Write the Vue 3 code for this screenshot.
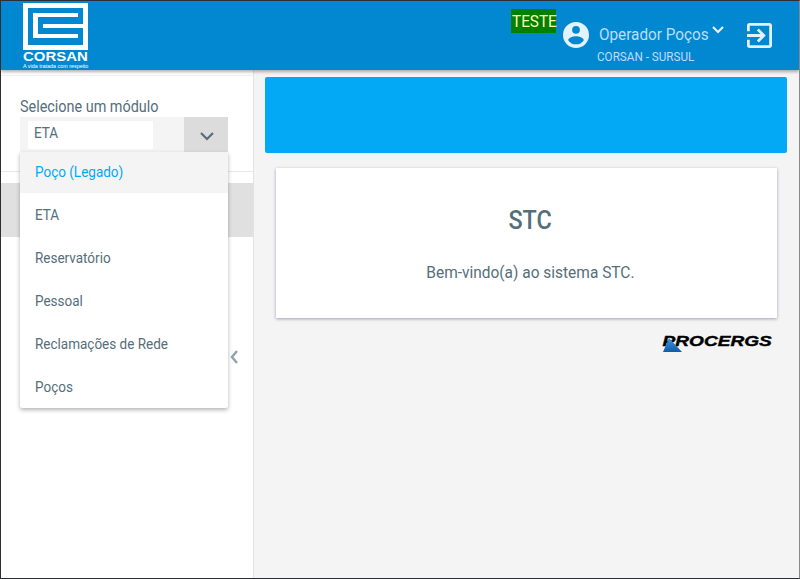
<script setup>
const items = ['Poço (Legado)', 'ETA', 'Reservatório', 'Pessoal', 'Reclamações de Rede', 'Poços']
</script>

<template>
  <div class="page">
    <header class="top">
      <div class="brand">
        <svg class="logo" width="65" height="47" viewBox="0 0 65 47">
          <rect width="65" height="47" fill="#fff" />
          <rect x="5" y="5" width="55" height="37" fill="#0288d1" />
          <path d="M55 10H10V35H55V31H15V14H55z" fill="#fff" />
          <rect x="20" y="21" width="40" height="4" fill="#fff" />
        </svg>
        <div class="corsan">CORSAN</div>
        <div class="tagline">A vida tratada com respeito</div>
      </div>
      <div class="spacer"></div>
      <div class="teste"><span class="sq">TESTE</span></div>
      <svg class="account" width="26" height="26" viewBox="2 2 20 20">
        <path fill="#e3f2fd" d="M12 2a10 10 0 1 0 0 20 10 10 0 0 0 0-20zm0 3a3 3 0 1 1 0 6 3 3 0 0 1 0-6zm0 14.2a7.2 7.2 0 0 1-6-3.22c.03-1.99 4-3.08 6-3.08s5.97 1.09 6 3.08a7.2 7.2 0 0 1-6 3.22z" />
      </svg>
      <div class="user">
        <div class="user-name"><span class="sq">Operador Poços</span>
          <svg class="caret" width="14" height="10" viewBox="0 0 14 10">
            <path d="M2 2l5 5 5-5" fill="none" stroke="#e3f2fd" stroke-width="2.2" />
          </svg>
        </div>
        <div class="user-org"><span class="sq">CORSAN - SURSUL</span></div>
      </div>
      <svg class="exit" width="25" height="25" viewBox="3 3 18 18">
        <path fill="#e3f2fd" d="M10.09 15.59L11.5 17l5-5-5-5-1.41 1.41L12.67 11H3v2h9.67l-2.58 2.59zM19 3H5a2 2 0 0 0-2 2v4h2V5h14v14H5v-4H3v4a2 2 0 0 0 2 2h14a2 2 0 0 0 2-2V5a2 2 0 0 0-2-2z" />
      </svg>
    </header>

    <div class="body">
      <aside class="side">
        <div class="side-head">
          <div class="side-rule"></div>
          <label class="sel-label"><span class="sq">Selecione um módulo</span></label>
          <div class="select">
            <div class="sel-value"><span class="sel-white"><span class="sq">ETA</span></span></div>
            <div class="sel-btn">
              <svg width="16" height="10" viewBox="0 0 16 10">
                <path d="M2 2l6 6 6-6" fill="none" stroke="#546e7a" stroke-width="2.2" />
              </svg>
            </div>
          </div>
        </div>
        <div class="side-band"></div>
        <div class="side-rest">
          <svg class="collapse" width="10" height="16" viewBox="0 0 10 16">
            <path d="M8 2L3 8l5 6" fill="none" stroke="#90a4ae" stroke-width="2.4" />
          </svg>
        </div>
        <ul class="menu">
          <li v-for="(it, i) in items" :key="it" :class="{ active: i === 0 }"><span class="sq">{{ it }}</span></li>
        </ul>
      </aside>

      <main class="main">
        <div class="banner"></div>
        <section class="card">
          <h1><span class="sq mid">STC</span></h1>
          <p><span class="sq mid">Bem-vindo(a) ao sistema STC.</span></p>
        </section>
        <div class="procergs">
          <span class="proc-text">PROCERGS</span>
          <svg class="tri" width="19" height="14" viewBox="0 0 19 14">
            <defs>
              <linearGradient id="triGrad" x1="0" y1="0" x2="0" y2="1">
                <stop offset="0" stop-color="#3f97dc" />
                <stop offset="1" stop-color="#0f5ca8" />
              </linearGradient>
            </defs>
            <path d="M6 0L19 14H0z" fill="url(#triGrad)" />
          </svg>
        </div>
      </main>
    </div>
  </div>
</template>

<style>
html, body { margin: 0; padding: 0; background: #fff; }
</style>

<style scoped>
.page {
  width: 800px;
  height: 579px;
  box-sizing: border-box;
  border: 1px solid #2b2f33;
  border-right-color: #888;
  display: flex;
  flex-direction: column;
  overflow: hidden;
  font-family: Roboto, "Liberation Sans", sans-serif;
  color: #546e7a;
  background: #f4f4f4;
}
.sq {
  display: inline-block;
  white-space: nowrap;
  transform: scaleX(.9);
  transform-origin: left center;
}
.sq.mid { transform-origin: center center; }
.top {
  height: 69px;
  flex: none;
  background: #0288d1;
  display: flex;
  align-items: flex-start;
  position: relative;
  z-index: 2;
  box-shadow: 0 2px 3px rgba(0, 0, 0, .3);
}
.brand {
  margin: 2px 0 0 22px;
  width: 65px;
  color: #fff;
  display: flex;
  flex-direction: column;
}
.logo { display: block; }
.corsan {
  font-family: "Liberation Sans", sans-serif;
  font-weight: 700;
  font-size: 13px;
  line-height: 12px;
  margin-top: 1px;
  transform: scaleX(1.15);
  transform-origin: left center;
  white-space: nowrap;
}
.tagline {
  font-family: "Liberation Sans", sans-serif;
  font-size: 5.4px;
  line-height: 7px;
  white-space: nowrap;
}
.spacer { flex: 1; }
.teste {
  margin-top: 8px;
  width: 45px;
  height: 24px;
  background: #008000;
  color: #ffffb8;
  font-size: 17px;
  line-height: 24px;
  padding-left: 1px;
  box-sizing: border-box;
  flex: none;
}
.account { margin: 21px 0 0 7px; flex: none; }
.user { margin: 22px 0 0 10px; width: 148px; flex: none; color: #bbdefb; }
.user-name { font-size: 17px; line-height: 22px; position: relative; }
.caret { position: absolute; left: 112px; top: 2px; }
.user-org { font-size: 13px; line-height: 14px; margin-top: 5px; margin-left: -2px; }
.exit { margin: 22px 27px 0 0; flex: none; }

.body { flex: 1; display: flex; min-height: 0; }
.side {
  width: 252px;
  flex: none;
  background: #fff;
  border-right: 1px solid #e3e3e3;
  display: flex;
  flex-direction: column;
  position: relative;
}
.side-head {
  height: 102px;
  flex: none;
  box-sizing: border-box;
  padding: 5px 25px 0 19px;
  border-bottom: 1px solid #e8e8e8;
}
.side-rule { height: 1px; background: #eee; margin: 0 -25px 21px -19px; }
.sel-label { display: block; font-size: 16px; line-height: 20px; color: #546e7a; }
.select {
  height: 35px;
  background: #f4f4f4;
  border-bottom: 1px solid #81d4fa;
  display: flex;
}
.sel-value { flex: 1; padding: 4px 0 3px 8px; display: flex; }
.sel-white {
  width: 125px;
  background: #fff;
  box-sizing: border-box;
  padding-left: 6px;
  font-size: 15px;
  line-height: 25px;
}
.sel-btn {
  width: 44px;
  background: #dcdcdc;
  display: flex;
  align-items: center;
  justify-content: center;
  padding: 2px 0 0 1px;
  box-sizing: border-box;
}
.side-band { height: 54px; margin-top: 11px; background: #e0e0e0; flex: none; }
.side-rest { flex: 1; position: relative; }
.collapse { position: absolute; left: 228px; top: 112px; }
.menu {
  position: absolute;
  left: 19px;
  top: 82px;
  width: 208px;
  margin: 0;
  padding: 0;
  list-style: none;
  background: #fff;
  box-shadow: 0 2px 4px rgba(0, 0, 0, .3);
  border-radius: 0 0 2px 2px;
}
.menu li {
  height: 43px;
  line-height: 44px;
  padding-left: 15px;
  font-size: 15px;
  color: #546e7a;
}
.menu li.active { background: #f4f4f4; color: #03a9f4; height: 41px; line-height: 41px; }

.main { flex: 1; min-width: 0; padding: 7px 11px 0; display: flex; flex-direction: column; }
.banner { height: 76px; margin-right: 1px; background: #03a9f4; border-radius: 2px; flex: none; }
.card {
  margin: 15px 11px 0 11px;
  padding-left: 7px;
  height: 150px;
  background: #fff;
  box-shadow: 0 1px 3px rgba(60, 60, 110, .45);
  text-align: center;
  flex: none;
  display: flex;
  flex-direction: column;
  align-items: center;
}
.card h1 { margin: 36px 0 0; font-size: 26px; line-height: 32px; font-weight: 500; color: #546e7a; }
.card p { margin: 24px 0 0; font-size: 17px; line-height: 24px; color: #546e7a; }
.card p .sq { transform: scaleX(.91); }
.procergs {
  position: relative;
  align-self: flex-end;
  margin: 13px 16px 0 0;
  width: 110px;
  height: 20px;
}
.proc-text {
  position: absolute;
  right: 0;
  top: 0;
  color: #000;
  font-family: "Liberation Sans", sans-serif;
  font-style: italic;
  font-weight: 700;
  font-size: 15.5px;
  line-height: 20px;
  white-space: nowrap;
  -webkit-text-stroke: .4px #000;
  transform: scaleX(1.23);
  transform-origin: right center;
}
.tri { position: absolute; left: 1px; top: 7px; }
</style>
